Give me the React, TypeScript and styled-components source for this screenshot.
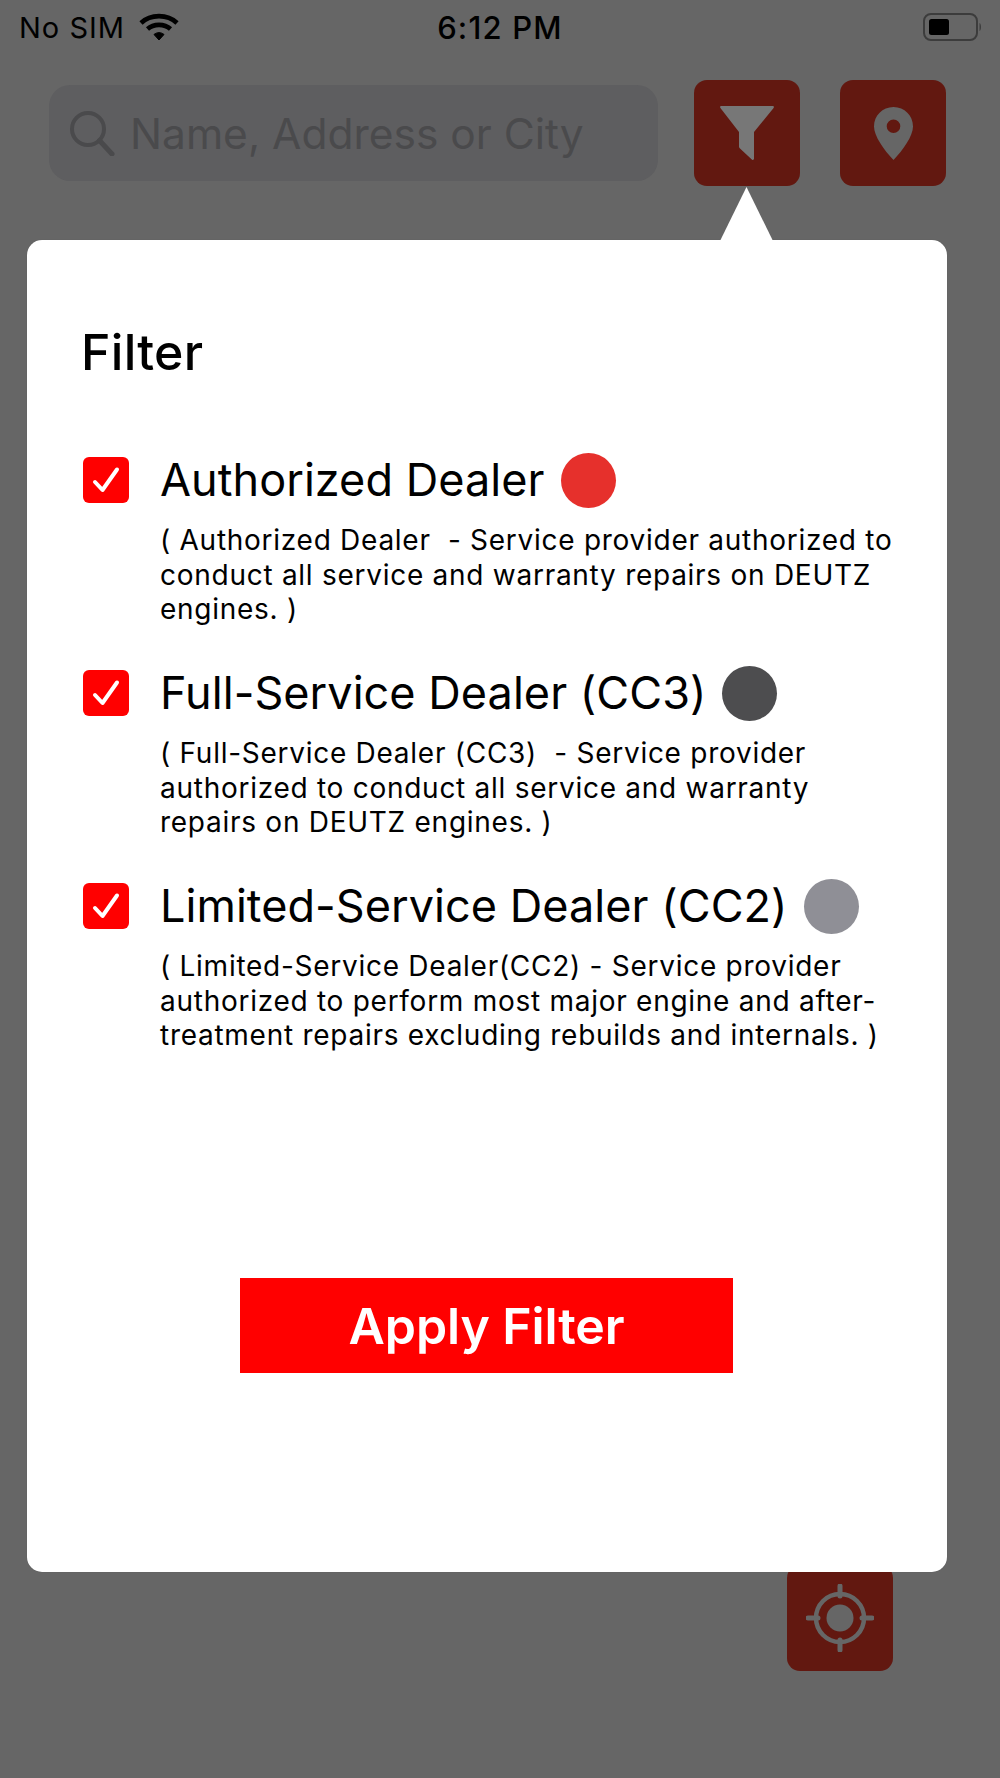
import React from "react";
import styled, { createGlobalStyle } from "styled-components";

const Global = createGlobalStyle`
  html, body { margin: 0; padding: 0; background: #666666; }
  * { box-sizing: border-box; }
  body { font-family: Inter, "Liberation Sans", sans-serif; }
`;

const Page = styled.div`
  position: relative;
  width: 1000px;
  height: 1778px;
  background: #666666;
  overflow: hidden;
`;

const StatusBar = styled.div`
  display: grid;
  grid-template-columns: 1fr auto 1fr;
  align-items: center;
  height: 54px;
  padding: 0 19px;
  color: #000;
  font-size: 29px;
`;

const Carrier = styled.div`
  display: flex;
  align-items: center;
  gap: 14px;
  letter-spacing: 1px;
`;

const Clock = styled.div`
  font-size: 31px;
  font-weight: 500;
  letter-spacing: 1.2px;
`;

const BatterySlot = styled.div`
  display: flex;
  justify-content: flex-end;
  margin-right: -1px;
`;

const Toolbar = styled.div`
  display: flex;
  align-items: center;
  height: 106px;
  margin-top: 26px;
  padding: 0 54px 0 49px;
`;

const SearchBox = styled.div`
  display: flex;
  align-items: center;
  gap: 15px;
  width: 609px;
  height: 96px;
  padding: 0 20px;
  border-radius: 21px;
  background: #5e5e60;
  color: #4a4a4c;
  font-size: 42.5px;
`;

const IconButton = styled.div<{ $gap?: number }>`
  display: flex;
  align-items: center;
  justify-content: center;
  width: 106px;
  height: 106px;
  margin-left: ${(p) => p.$gap ?? 0}px;
  border-radius: 13px;
  background: #621810;
  color: #666666;
`;

const TargetButton = styled(IconButton)`
  position: absolute;
  left: 787px;
  top: 1565px;
`;

const Popover = styled.div`
  position: absolute;
  left: 27px;
  top: 240px;
  display: flex;
  flex-direction: column;
  width: 920px;
  height: 1332px;
  padding: 85px 50px 0 55px;
  border-radius: 15px;
  background: #fff;
  color: #000;
  box-shadow: 0 0 1px rgba(0, 0, 0, 0.2);
`;

const Arrow = styled.svg`
  position: absolute;
  left: 693px;
  top: -53px;
`;

const Title = styled.h2`
  margin: 0 0 78px -1px;
  font-size: 50px;
  line-height: 54px;
  font-weight: 500;
  letter-spacing: 0.3px;
`;

const Options = styled.div`
  display: flex;
  flex-direction: column;
  gap: 23px;
`;

const Option = styled.div`
  display: grid;
  grid-template-columns: 46px 1fr;
  column-gap: 32px;
  height: 190px;
`;

const CheckBox = styled.div`
  display: flex;
  align-items: center;
  justify-content: center;
  width: 46px;
  height: 46px;
  margin-left: 1px;
  border-radius: 6px;
  background: #ff0000;
`;

const OptionBody = styled.div`
  display: flex;
  flex-direction: column;
`;

const OptionHead = styled.div`
  display: flex;
  align-items: center;
  gap: 16px;
  height: 46px;
  margin-bottom: 20px;
`;

const OptionLabel = styled.span`
  font-size: 45px;
  line-height: 46px;
  letter-spacing: 0.05px;
  white-space: nowrap;
`;

const Dot = styled.span<{ $color: string }>`
  flex: none;
  width: 55px;
  height: 55px;
  border-radius: 50%;
  background: ${(p) => p.$color};
`;

const Description = styled.p`
  margin: 0;
  font-size: 28px;
  line-height: 34.5px;
  letter-spacing: 0.73px;
  white-space: pre-wrap;
`;

const ApplyButton = styled.button`
  align-self: flex-start;
  width: 493px;
  height: 95px;
  margin: 205px 0 0 158px;
  padding: 0;
  border: 0;
  background: #ff0000;
  color: #fff;
  font-family: inherit;
  font-size: 50px;
  font-weight: 600;
  letter-spacing: -0.1px;
`;

const Wifi = () => (
  <svg width="40" height="28" viewBox="0 0 40 28" fill="none" stroke="#000" strokeWidth="4.6">
    <path d="M2 10C11.5 .8 28.5 .8 38 10" />
    <path d="M8.5 16C14.5 10.5 25.5 10.5 31.5 16" />
    <path d="M15 21.5L20 27L25 21.5C22 19 18 19 15 21.5Z" fill="#000" strokeWidth="1" />
  </svg>
);

const Battery = () => (
  <svg width="60" height="30" viewBox="0 0 60 30" fill="none">
    <rect x="2" y="2" width="53" height="26" rx="7" stroke="#3c3c3c" strokeWidth="2" />
    <rect x="7" y="7" width="20" height="16" rx="2.5" fill="#000" />
    <path d="M57.5 11C59.5 12 59.5 18 57.5 19Z" fill="#3c3c3c" />
  </svg>
);

const SearchIcon = () => (
  <svg width="46" height="46" viewBox="0 0 46 46" fill="none" stroke="#4a4a4c" strokeWidth="4" strokeLinecap="round">
    <circle cx="19" cy="19" r="16" />
    <path d="M30.5 30.5L43 44" strokeWidth="5" />
  </svg>
);

const FunnelIcon = () => (
  <svg width="54" height="54" viewBox="0 0 54 54" fill="#777777">
    <path d="M1.5 0H52.5C54 0 54.4 1.2 53.4 2.2L34 26V52.5C34 54 32.8 54.4 31.8 53.4L20 42.5C19.4 42 19 41.2 19 40.4V26L.6 2.2C-.4 1.2 0 0 1.5 0Z" />
  </svg>
);

const PinIcon = () => (
  <svg width="39" height="53" viewBox="0 0 39 53">
    <path
      fillRule="evenodd"
      fill="currentColor"
      d="M19.5 0C30.5 0 39 8.5 39 19.5C39 29 29 43 19.5 53C10 43 0 29 0 19.5C0 8.5 8.5 0 19.5 0ZM19.5 12.5A6.8 6.8 0 1 0 19.5 26.1A6.8 6.8 0 1 0 19.5 12.5Z"
    />
  </svg>
);

const TargetIcon = () => (
  <svg width="68" height="68" viewBox="0 0 68 68" fill="none" stroke="currentColor">
    <circle cx="34" cy="34" r="24" strokeWidth="4.5" />
    <circle cx="34" cy="34" r="13.5" fill="currentColor" strokeWidth="0" />
    <path d="M34 2V12M34 56V66M2 34H12M56 34H66" strokeWidth="5" strokeLinecap="round" />
  </svg>
);

const Check = () => (
  <svg width="28" height="28" viewBox="0 0 28 28" fill="none" stroke="#fff" strokeWidth="4" strokeLinecap="round" strokeLinejoin="round">
    <path d="M3 16L10.5 24L25 3.5" />
  </svg>
);

const OPTIONS = [
  {
    label: "Authorized Dealer",
    color: "#e6302c",
    text: "( Authorized Dealer  - Service provider authorized to\nconduct all service and warranty repairs on DEUTZ\nengines. )",
  },
  {
    label: "Full-Service Dealer (CC3)",
    color: "#4d4d4f",
    text: "( Full-Service Dealer (CC3)  - Service provider\nauthorized to conduct all service and warranty\nrepairs on DEUTZ engines. )",
  },
  {
    label: "Limited-Service Dealer (CC2)",
    color: "#8f8f96",
    text: "( Limited-Service Dealer(CC2) - Service provider\nauthorized to perform most major engine and after-\ntreatment repairs excluding rebuilds and internals. )",
  },
];

export default function App() {
  return (
    <Page>
      <Global />
      <StatusBar>
        <Carrier>
          No SIM <Wifi />
        </Carrier>
        <Clock>6:12 PM</Clock>
        <BatterySlot>
          <Battery />
        </BatterySlot>
      </StatusBar>
      <Toolbar>
        <SearchBox>
          <SearchIcon />
          Name, Address or City
        </SearchBox>
        <IconButton $gap={36}>
          <FunnelIcon />
        </IconButton>
        <IconButton $gap={40}>
          <PinIcon />
        </IconButton>
      </Toolbar>
      <TargetButton>
        <TargetIcon />
      </TargetButton>
      <Popover>
        <Arrow width="53" height="54" viewBox="0 0 53 54">
          <path d="M26.5 0L53 54H0Z" fill="#fff" />
        </Arrow>
        <Title>Filter</Title>
        <Options>
          {OPTIONS.map((o) => (
            <Option key={o.label}>
              <CheckBox>
                <Check />
              </CheckBox>
              <OptionBody>
                <OptionHead>
                  <OptionLabel>{o.label}</OptionLabel>
                  <Dot $color={o.color} />
                </OptionHead>
                <Description>{o.text}</Description>
              </OptionBody>
            </Option>
          ))}
        </Options>
        <ApplyButton>Apply Filter</ApplyButton>
      </Popover>
    </Page>
  );
}
